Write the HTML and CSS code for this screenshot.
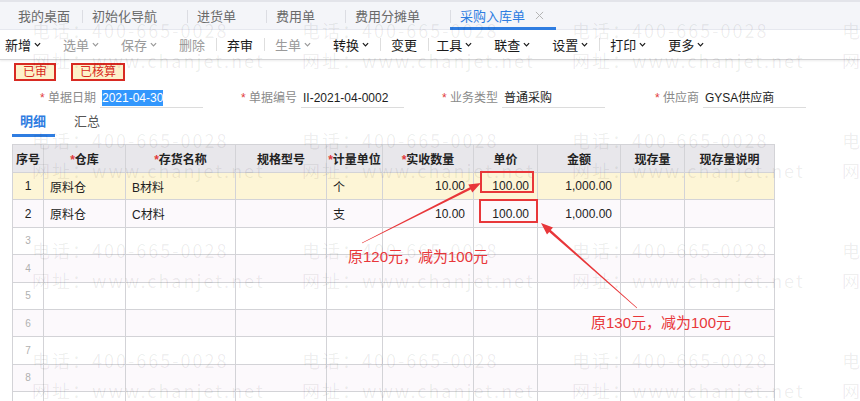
FILE: index.html
```html
<!DOCTYPE html>
<html lang="zh-CN">
<head>
<meta charset="utf-8">
<title>采购入库单</title>
<link rel="stylesheet" href="styles.css">
</head>
<body>
<div class="page">
  <div class="tabbar">
    <div class="tab tab-first">我的桌面</div>
    <div class="tab">初始化导航</div>
    <div class="tab">进货单</div>
    <div class="tab">费用单</div>
    <div class="tab">费用分摊单</div>
    <div class="tab tab-active">采购入库单<svg class="close" viewBox="0 0 10 10"><path d="M1 1L9 9M9 1L1 9" stroke="currentColor" stroke-width="1.1"/></svg></div>
  </div>

  <div class="toolbar">
    <span class="tb-item">新增<svg class="chev" viewBox="0 0 8 5"><path d="M1 1l3 3 3-3" fill="none" stroke="currentColor" stroke-width="1.4"/></svg></span>
    <span class="tb-item off">选单<svg class="chev" viewBox="0 0 8 5"><path d="M1 1l3 3 3-3" fill="none" stroke="currentColor" stroke-width="1.4"/></svg></span>
    <span class="tb-item off">保存<svg class="chev" viewBox="0 0 8 5"><path d="M1 1l3 3 3-3" fill="none" stroke="currentColor" stroke-width="1.4"/></svg></span>
    <span class="tb-item off">删除</span>
    <span class="tb-sep"></span>
    <span class="tb-item">弃审</span>
    <span class="tb-sep"></span>
    <span class="tb-item off">生单<svg class="chev" viewBox="0 0 8 5"><path d="M1 1l3 3 3-3" fill="none" stroke="currentColor" stroke-width="1.4"/></svg></span>
    <span class="tb-item">转换<svg class="chev" viewBox="0 0 8 5"><path d="M1 1l3 3 3-3" fill="none" stroke="currentColor" stroke-width="1.4"/></svg></span>
    <span class="tb-sep"></span>
    <span class="tb-item">变更</span>
    <span class="tb-sep tb-sep-tight"></span>
    <span class="tb-item">工具<svg class="chev" viewBox="0 0 8 5"><path d="M1 1l3 3 3-3" fill="none" stroke="currentColor" stroke-width="1.4"/></svg></span>
    <span class="tb-item">联查<svg class="chev" viewBox="0 0 8 5"><path d="M1 1l3 3 3-3" fill="none" stroke="currentColor" stroke-width="1.4"/></svg></span>
    <span class="tb-item">设置<svg class="chev" viewBox="0 0 8 5"><path d="M1 1l3 3 3-3" fill="none" stroke="currentColor" stroke-width="1.4"/></svg></span>
    <span class="tb-sep"></span>
    <span class="tb-item">打印<svg class="chev" viewBox="0 0 8 5"><path d="M1 1l3 3 3-3" fill="none" stroke="currentColor" stroke-width="1.4"/></svg></span>
    <span class="tb-item">更多<svg class="chev" viewBox="0 0 8 5"><path d="M1 1l3 3 3-3" fill="none" stroke="currentColor" stroke-width="1.4"/></svg></span>
  </div>

  <div class="badges">
    <span class="badge">已审</span>
    <span class="badge">已核算</span>
  </div>

  <div class="form">
    <div class="field"><label class="lbl"><i>*</i> 单据日期</label><div class="val"><span class="sel">2021-04-30</span></div></div>
    <div class="field"><label class="lbl"><i>*</i> 单据编号</label><div class="val">II-2021-04-0002</div></div>
    <div class="field"><label class="lbl"><i>*</i> 业务类型</label><div class="val">普通采购</div></div>
    <div class="field"><label class="lbl"><i>*</i> 供应商</label><div class="val">GYSA供应商</div></div>
  </div>

  <div class="subtabs">
    <span class="subtab active">明细</span>
    <span class="subtab">汇总</span>
  </div>

  <table class="grid">
    <colgroup>
      <col style="width:31px"><col style="width:82px"><col style="width:110px"><col style="width:91px"><col style="width:56px">
      <col style="width:91px"><col style="width:64px"><col style="width:83px"><col style="width:64px"><col style="width:90px">
    </colgroup>
    <thead>
      <tr>
        <th>序号</th><th><i>*</i>仓库</th><th><i>*</i>存货名称</th><th>规格型号</th><th><i>*</i>计量单位</th>
        <th><i>*</i>实收数量</th><th>单价</th><th>金额</th><th>现存量</th><th>现存量说明</th>
      </tr>
    </thead>
    <tbody>
      <tr class="cur"><td class="no">1</td><td>原料仓</td><td>B材料</td><td></td><td>个</td><td class="num">10.00</td><td class="num">100.00</td><td class="num">1,000.00</td><td></td><td></td></tr>
      <tr class="alt"><td class="no">2</td><td>原料仓</td><td>C材料</td><td></td><td>支</td><td class="num">10.00</td><td class="num">100.00</td><td class="num">1,000.00</td><td></td><td></td></tr>
      <tr><td class="no empty">3</td><td></td><td></td><td></td><td></td><td></td><td></td><td></td><td></td><td></td></tr>
      <tr class="alt"><td class="no empty">4</td><td></td><td></td><td></td><td></td><td></td><td></td><td></td><td></td><td></td></tr>
      <tr><td class="no empty">5</td><td></td><td></td><td></td><td></td><td></td><td></td><td></td><td></td><td></td></tr>
      <tr class="alt"><td class="no empty">6</td><td></td><td></td><td></td><td></td><td></td><td></td><td></td><td></td><td></td></tr>
      <tr><td class="no empty">7</td><td></td><td></td><td></td><td></td><td></td><td></td><td></td><td></td><td></td></tr>
      <tr class="alt"><td class="no empty">8</td><td></td><td></td><td></td><td></td><td></td><td></td><td></td><td></td><td></td></tr>
      <tr><td class="no empty">9</td><td></td><td></td><td></td><td></td><td></td><td></td><td></td><td></td><td></td></tr>
      <tr class="alt"><td class="no empty">10</td><td></td><td></td><td></td><td></td><td></td><td></td><td></td><td></td><td></td></tr>
    </tbody>
  </table>

  <div class="watermark">
    <div class="wm"><span>电话：400-665-0028</span><span>网址：www.chanjet.net</span></div>
    <div class="wm"><span>电话：400-665-0028</span><span>网址：www.chanjet.net</span></div>
    <div class="wm"><span>电话：400-665-0028</span><span>网址：www.chanjet.net</span></div>
    <div class="wm"><span>电话：400-665-0028</span><span>网址：www.chanjet.net</span></div>
    <div class="wm"><span>电话：400-665-0028</span><span>网址：www.chanjet.net</span></div>
    <div class="wm"><span>电话：400-665-0028</span><span>网址：www.chanjet.net</span></div>
    <div class="wm"><span>电话：400-665-0028</span><span>网址：www.chanjet.net</span></div>
    <div class="wm"><span>电话：400-665-0028</span><span>网址：www.chanjet.net</span></div>
    <div class="wm"><span>电话：400-665-0028</span><span>网址：www.chanjet.net</span></div>
    <div class="wm"><span>电话：400-665-0028</span><span>网址：www.chanjet.net</span></div>
    <div class="wm"><span>电话：400-665-0028</span><span>网址：www.chanjet.net</span></div>
    <div class="wm"><span>电话：400-665-0028</span><span>网址：www.chanjet.net</span></div>
    <div class="wm"><span>电话：400-665-0028</span><span>网址：www.chanjet.net</span></div>
    <div class="wm"><span>电话：400-665-0028</span><span>网址：www.chanjet.net</span></div>
    <div class="wm"><span>电话：400-665-0028</span><span>网址：www.chanjet.net</span></div>
    <div class="wm"><span>电话：400-665-0028</span><span>网址：www.chanjet.net</span></div>
  </div>

  <svg class="marks" viewBox="0 0 860 401" width="860" height="401">
    <rect x="481" y="172" width="52" height="20" fill="none" stroke="#e8373a" stroke-width="2"/>
    <rect x="480" y="200" width="57" height="22" fill="none" stroke="#e8373a" stroke-width="2"/>
    <polygon fill="#e8373a" points="362.1,243.2 470.8,189.5 472.3,192.4 481,183 468.3,184.4 469.8,187.3 361.9,242.8"/>
    <polygon fill="#e8373a" points="637.2,307.8 550.8,230.1 553.0,227.6 541,223 547.0,234.4 549.2,231.9 636.8,308.2"/>
  </svg>
  <span class="note note-a">原120元，减为100元</span>
  <span class="note note-b">原130元，减为100元</span>
</div>
</body>
</html>
```

FILE: styles.css
```css
* { box-sizing: border-box; }
body {
  margin: 0;
  font-family: "Liberation Sans", "Noto Sans CJK SC", sans-serif;
  background: #fff;
}
.page {
  position: relative;
  width: 860px;
  height: 401px;
  overflow: hidden;
  background: #fff;
}

/* top tabs */
.tabbar {
  height: 30px;
  display: flex;
  align-items: stretch;
  padding-left: 8px;
  background: #f4f5f9;
  border-top: 2px solid #e3e4ea;
  border-bottom: 1px solid #e7e9f0;
  font-size: 13px;
  color: #6a6a6a;
}
.tab {
  position: relative;
  display: flex;
  align-items: center;
  padding: 0 30px 1px 10px;
}
.tab-first { padding-right: 12px; }
.tab + .tab::before {
  content: "";
  position: absolute;
  left: 0;
  top: 8px;
  width: 1px;
  height: 13px;
  background: #dcdde3;
}
.tab-active {
  color: #2f7de1;
  padding-right: 12px;
}
.tab-active::after {
  content: "";
  position: absolute;
  left: 0;
  right: 0;
  bottom: -1px;
  height: 3px;
  background: #2f7de1;
}
.close {
  width: 9px;
  height: 9px;
  margin-left: 10px;
  color: #b4b4b4;
}

/* toolbar */
.toolbar {
  height: 30px;
  display: flex;
  align-items: center;
  padding-left: 5px;
  font-size: 13px;
  color: #1a1a1a;
  border-bottom: 1px solid #d4d4d6;
  box-shadow: 0 1px 2px rgba(0, 0, 0, 0.08);
}
.tb-item {
  display: flex;
  align-items: center;
  margin-right: 22px;
  white-space: nowrap;
}
.tb-item.off { color: #9a9a9a; }
.chev {
  width: 7px;
  height: 5px;
  margin-left: 3px;
}
.tb-sep {
  width: 1px;
  height: 13px;
  background: #dedede;
  margin: 0 10px 0 -11px;
}
.tb-sep-tight { margin-right: 7px; }

/* status badges */
.badges {
  display: flex;
  gap: 15px;
  padding: 3px 0 0 14px;
}
.badge {
  height: 18px;
  padding: 0 7px;
  border: 2px solid #d82a22;
  background: #fdf1c9;
  color: #d82a22;
  font-size: 12px;
  line-height: 14px;
}

/* header fields */
.form {
  display: flex;
  margin-top: 7px;
  padding-left: 2px;
  font-size: 12px;
}
.field {
  display: flex;
  width: 201px;
  height: 20px;
}
.lbl {
  width: 94px;
  text-align: right;
  color: #8a8a8a;
  line-height: 20px;
  white-space: nowrap;
}
.lbl i, .grid th i {
  font-style: normal;
  color: #e23b3b;
}
.val {
  width: 103px;
  margin-left: 4px;
  border-bottom: 1px solid #dcdcdc;
  color: #1e1e1e;
  line-height: 20px;
  padding-left: 2px;
  white-space: nowrap;
}
.sel {
  background: #3297fd;
  color: #fff;
  padding: 1px 0;
}

/* detail / summary tabs */
.subtabs {
  display: flex;
  height: 29px;
  padding-left: 12px;
  font-size: 13px;
}
.subtab {
  position: relative;
  padding: 5px 9px 0 8px;
  line-height: 18px;
  color: #555;
}
.subtab + .subtab { margin-left: 11px; }
.subtab.active {
  color: #2f7de1;
  font-weight: bold;
}
.subtab.active::after {
  content: "";
  position: absolute;
  left: 0;
  right: 0;
  bottom: 0;
  height: 3px;
  background: #2f7de1;
}

/* grid */
.grid {
  margin: 7px 0 0 12px;
  width: 763px;
  table-layout: fixed;
  border-collapse: collapse;
  font-size: 12px;
  color: #222;
}
.grid th, .grid td {
  border: 1px solid #d3d3d7;
  padding: 0 6px;
  white-space: nowrap;
  overflow: hidden;
}
.grid thead tr { height: 28px; }
.grid th {
  background: #e8e7eb;
  font-weight: bold;
  font-size: 12px;
  text-align: center;
  color: #222;
  padding: 0 1px;
}
.grid tbody tr { height: 27.4px; }
.grid tr.cur td { background: #fdf5d6; }
.grid tr.alt td { background: #fcf9fc; }
.grid td.no { text-align: center; padding: 0; }
.grid td.no.empty { color: #b0b0b0; font-size: 10px; }
.grid td.num { text-align: right; padding-right: 8px; }

/* watermark overlay */
.watermark {
  position: absolute;
  left: 32px;
  top: 20px;
  display: grid;
  grid-template-columns: repeat(4, 270px);
  grid-auto-rows: 110px;
  pointer-events: none;
  font-family: "Noto Sans CJK SC", sans-serif;
  font-size: 18px;
  letter-spacing: 2px;
  color: rgba(0, 0, 0, 0.07);
}
.wm {
  display: flex;
  flex-direction: column;
  gap: 10px;
  white-space: nowrap;
}
.wm span { line-height: 20px; }

/* annotations */
.marks {
  position: absolute;
  left: 0;
  top: 0;
  pointer-events: none;
}
.note {
  position: absolute;
  font-size: 15px;
  line-height: 18px;
  color: #e8373a;
  white-space: nowrap;
}
.note-a { left: 348px; top: 248px; }
.note-b { left: 591px; top: 314px; }
```
